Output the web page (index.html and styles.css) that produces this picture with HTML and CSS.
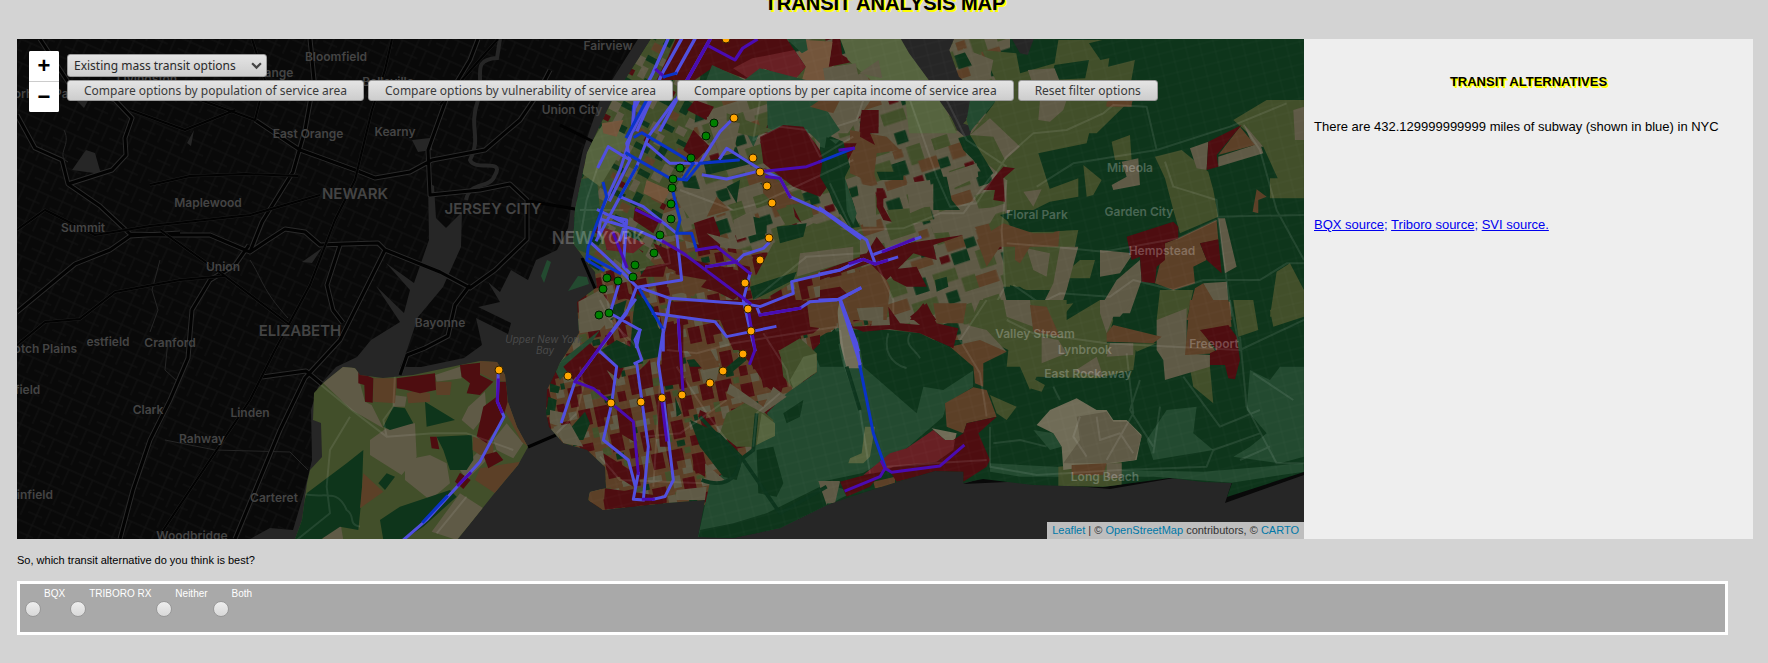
FILE: index.html
```html
<!DOCTYPE html>
<html lang="en">
<head>
<meta charset="utf-8">
<title>Transit Analysis Map</title>
<link rel="stylesheet" href="styles.css">
</head>
<body>
<h1 class="page-title">TRANSIT ANALYSIS MAP</h1>
<main class="layout">
<section class="map" aria-label="Transit map">
<svg class="map-canvas" viewBox="17 39 1287 500" preserveAspectRatio="xMidYMid slice" role="img" aria-label="New York area census tracts and subway lines">
<defs>
<pattern id="streets" width="26" height="22" patternUnits="userSpaceOnUse" patternTransform="rotate(24)"><path d="M0,5H26M9,0V22M0,16H15M20,5V22" fill="none" stroke="#131313"/></pattern>
<pattern id="lanes" width="14" height="11" patternUnits="userSpaceOnUse" patternTransform="rotate(-14)"><path d="M0,3H14M5,0V11" fill="none" stroke="#fff" stroke-opacity=".02"/></pattern>
<pattern id="uptown" width="46" height="52" patternUnits="userSpaceOnUse" patternTransform="rotate(28)">
<path class="olive" d="M0,0H46V52H0Z"/><path class="forest" d="M0,4H12V10H0ZM20,12H34V17H20ZM8,26H16V40H8ZM30,34H46V40H30Z"/><path class="sand" d="M14,0H24V8H14ZM36,8H46V18H36ZM0,16H7V28H0ZM20,40H30V50H20Z"/><path class="clay" d="M24,20H36V26H24ZM0,42H10V50H0Z"/><path class="rust" d="M36,24H42V30H36Z"/>
</pattern>
<pattern id="queens" width="78" height="70" patternUnits="userSpaceOnUse" patternTransform="rotate(-18) scale(1.2)">
<path class="sand" d="M0,0H78V70H0Z"/><path class="olive" d="M0,0H14V10H0ZM22,6H40V20H22ZM56,0H68V16H56ZM6,30H20V46H6ZM44,38H64V48H44ZM20,56H42V70H20ZM66,48H78V60H66Z"/><path class="forest" d="M40,10H52V22H40ZM0,18H9V26H0ZM64,26H78V36H64ZM26,38H38V50H26ZM50,56H60V66H50Z"/><path class="clay" d="M12,10H24V22H12ZM30,22H48V30H30ZM62,14H78V24H62ZM0,50H18V60H0ZM44,0H52V7H44Z"/><path class="rust" d="M20,28H28V35H20ZM54,26H62V32H54Z"/>
</pattern>
<pattern id="kings" width="62" height="58" patternUnits="userSpaceOnUse" patternTransform="rotate(-12)">
<path class="clay" d="M0,0H62V58H0Z"/><path class="rust" d="M0,0H16V12H8V20H0ZM24,8H36V22H30V28H24ZM46,0H58V16H46ZM10,30H22V48H10ZM40,34H54V42H48V54H40ZM26,48H34V58H26Z"/><path class="sand" d="M16,12H22V26H12V20H16ZM36,0H44V8H36ZM38,22H52V28H38ZM0,26H8V38H0ZM54,44H62V58H54ZM28,34H36V42H28Z"/><path class="olive" d="M18,0H24V6H18ZM56,20H62V30H56ZM0,42H8V50H0ZM24,30H32V34H24Z"/><path class="forest" d="M34,28H38V34H34ZM12,50H20V56H12Z"/>
</pattern>
<clipPath id="island"><path id="city-shape" d="M651,39L612,100 587,153 575,210 573,243 583,257 595,272 597,287 577,302 579,333 560,363 547,390 546,413 549,427 563,443 587,450 605,467 606,488 590,492 588,500 603,510 667,503 705,500 698,537 733,538 780,528 827,505 853,496 897,482 935,471 963,472 963,483 983,479 1033,485 1103,487 1170,478 1203,482 1232,483 1227,497 1304,472V39Z"/></clipPath>
<clipPath id="richmond"><path d="M323,383L343,367 355,368 360,375 383,378 413,375 460,365 480,361 497,362 505,375 508,402 517,427 528,447 518,465 493,495 458,539H295L302,520 307,483 310,470 322,457 321,423 313,420 314,393Z"/></clipPath>
</defs>
<path class="land" d="M17,39H1304V539H17Z"/>
<path d="M17,39H640V539H17Z" fill="url(#streets)"/>
<path class="water" d="M638,39L617,72 600,100 583,150 572,200 568,228 557,250 536,260 528,280 511,270 500,292 488,282 500,302 478,307 511,323 508,334 476,318 482,345 464,358 421,367 400,367 407,350 418,317 443,287 461,247 462,212 446,228 436,218 434,186 428,182 429,240 414,283 386,263 410,290 404,313 376,286 400,322 371,340 357,357 336,367 318,387 311,410 312,460 304,493 293,530 270,528 250,539H1304V39Z"/>
<path class="water" d="M72,170L86,150 95,153 101,174ZM187,143L194,130 191,146ZM412,140L430,138 432,150 418,152ZM302,262L322,248 312,263ZM76,100L90,97 84,108Z"/>
<path class="stream" d="M478,100C468,130 482,135 470,160C475,172 505,158 495,175C490,190 470,180 466,200M500,39L497,58C470,60 485,75 478,100"/>
<path class="stream thin" d="M64,130C72,145 55,155 68,162M160,260L152,290 158,310 150,332M168,340L165,370 178,382 170,398M165,440L215,450 290,452 308,470M250,260C262,278 262,290 288,318"/>
<path class="casing" d="M17,115L35,148 62,160 68,184 100,206 130,234 170,235 210,235 250,252 268,240 285,229 305,232 320,245 345,244 378,243 385,250 440,272 470,288 495,270 527,239 527,200 510,184 480,190 430,195 428,150 446,100 470,60 478,39M17,312L75,264 110,250 130,236 180,233M68,184L112,170 126,155 125,138 132,118 115,100 70,85 40,39M250,252L262,222 293,172 305,130 314,80 310,39M120,539L133,490 150,440 170,400 188,358 192,310 210,280 235,265 249,245M340,245L327,285 333,310 343,323M385,250L340,340 305,378 280,430 235,539M262,377L306,371 323,385M400,375L407,355 425,348 448,336 455,305 470,285M255,120L300,150 355,170 375,178 410,172 432,160 485,150 520,120 537,95 550,70"/>
<path class="road" d="M17,115L35,148 62,160 68,184 100,206 130,234 170,235 210,235 250,252 268,240 285,229 305,232 320,245 345,244 378,243 385,250 440,272 470,288 495,270 527,239 527,200 510,184 480,190 430,195 428,150 446,100 470,60 478,39M17,312L75,264 110,250 130,236 180,233M68,184L112,170 126,155 125,138 132,118 115,100 70,85 40,39M250,252L262,222 293,172 305,130 314,80 310,39M120,539L133,490 150,440 170,400 188,358 192,310 210,280 235,265 249,245M340,245L327,285 333,310 343,323M385,250L340,340 305,378 280,430 235,539M262,377L306,371 323,385M400,375L407,355 425,348 448,336 455,305 470,285M255,120L300,150 355,170 375,178 410,172 432,160 485,150 520,120 537,95 550,70M528,201L575,209M560,125L600,145M582,258L600,300M528,447L556,435"/>
<path class="casing thin" d="M17,345L45,322 80,319 115,292 180,280 225,276M160,535L200,475 250,400 275,350 310,285 335,220 355,180 372,110 385,70 392,39M150,185L190,176 245,174 298,176M195,98L255,120 265,80 252,39M440,105L498,39M17,230L45,210 95,235 150,226 250,215 320,195M160,230L225,276 290,325M130,110L185,130 235,110"/>
<path class="road thin" d="M17,345L45,322 80,319 115,292 180,280 225,276M160,535L200,475 250,400 275,350 310,285 335,220 355,180 372,110 385,70 392,39M150,185L190,176 245,174 298,176M195,98L255,120 265,80 252,39M440,105L498,39M17,230L45,210 95,235 150,226 250,215 320,195M160,230L225,276 290,325M130,110L185,130 235,110"/>
<path class="marsh" d="M541,276L547,260 551,262 544,283ZM568,291L578,276 587,277 589,284Z"/>
<path class="land" d="M963,484L983,478 1110,489 1180,477 1232,482 1225,503 1304,475V470L1170,475Z"/>

<g clip-path="url(#richmond)">
<path class="olive" d="M290,355H535V540H290Z"/>
<g transform="translate(280 340) scale(.3333)">
<path class="sand" d="M130,130L190,70 235,90 240,130 255,185 275,195 310,265 215,210ZM465,105L540,80 545,115 470,125ZM340,250L405,250 410,350 365,405 270,345 270,300ZM375,360L450,345 500,370 510,430 450,480 375,420ZM565,200L615,155 620,220 580,270 545,240ZM540,390L590,340 650,330 560,420ZM640,300L680,250 730,310 700,355 650,330ZM540,460L610,505 530,600 455,575ZM120,575L180,540 190,600 130,600ZM340,165L380,170 375,200 340,200Z"/>
<path class="forest" d="M40,600L80,460 200,370 250,330 245,470 235,570 180,560 120,600ZM470,290L575,285 580,360 560,390 510,390 490,330ZM435,185L525,240 440,260ZM340,200L375,205 400,250 330,270 310,260ZM300,540L360,500 510,450 530,470 430,560 370,600 310,600ZM295,430L320,400 345,410 315,450Z"/>
<path class="clay" d="M280,115L350,115 345,190 280,185ZM380,160L410,150 450,160 450,185 385,190ZM465,125L515,125 510,165 470,165ZM600,60L680,65 680,125 640,120 600,100ZM660,185L685,185 745,320 725,305ZM250,400L310,455 240,505ZM600,385L720,365 700,430 645,460 585,420ZM580,290L640,310 640,340 600,345 578,330Z"/>
<path class="rust" d="M235,95L280,115 278,188 255,185 253,135 235,130ZM350,115L465,100 468,150 420,160 380,150 350,145ZM540,75L600,68 600,105 640,125 600,165 560,160 570,130 545,110ZM655,125L680,125 683,185 670,230 620,310 590,290 610,200 650,170ZM450,290L470,290 478,328 455,325ZM610,345L650,335 670,360 625,385ZM540,398L572,420 550,447 525,425Z"/>
<path class="ridge" d="M80,100L215,210 320,290 460,280 560,280 700,330M210,230L150,330 140,440 150,520 50,600M320,290L310,240 340,200 345,100M470,580L560,470M60,460C130,480 170,440 200,510C230,530 200,550 240,560"/>
</g>
</g>

<g clip-path="url(#island)">
<path class="forest" d="M570,39H1304V539H540Z"/>
<path d="M640,39H1010V340H640Z" fill="url(#queens)"/>
<path d="M570,39H705L690,160 664,210 650,262 600,285H560Z" fill="url(#uptown)"/>
<path d="M540,290L610,270 650,262 665,235 700,245 850,262 880,290 870,330 800,400 700,510H540Z" fill="url(#kings)"/>
<path class="marsh" d="M698,537L710,482 740,463 753,447 773,433 767,413 787,393 817,372 817,350 837,328 890,330 920,333 953,350 973,370 973,387 947,403 943,417 907,448 863,473 820,482 853,492 780,530Z"/>
<g transform="translate(580 0) scale(.3827 .3333)">
<path class="rust" d="M250,117H540L590,200 560,240 480,205 440,240 350,200 300,240H200L230,170ZM660,117H680L685,165 715,185 650,200ZM490,375L560,365 590,400H480ZM735,330H780V400H730ZM300,300L350,320 330,360 280,330Z"/>
<path class="rust-pale" d="M400,205L450,175 560,150 590,200 560,240 480,205 440,235Z"/>
<path class="clay-pale" d="M590,120L660,125 650,200 640,240H580L590,200 570,160ZM560,300H640L640,330H580Z"/>
<path class="marsh" d="M540,117H590L595,150 580,160ZM470,205L590,240H430ZM490,300H560L640,370 600,400H490ZM345,195L430,240H330Z"/>
<path class="olive-pale" d="M680,117H840L900,220 940,290 985,400H860L850,300 760,240 700,180Z"/>
<path class="sand" d="M635,205L720,190 730,240H640ZM780,180L730,220 790,235ZM640,300H760L700,400H640Z"/>
<path class="water" d="M835,110L860,160 905,230 950,300 985,390 1015,420 1025,380 1000,370 1050,290 990,230 965,150 980,110ZM1125,110H1188L1170,165 1150,160Z"/>
<path class="olive" d="M1050,150L1140,160 1150,220 1240,190 1250,120H1390L1380,200 1450,180 1430,310 1350,400H1040L1110,300Z"/>
<path class="forest" d="M1240,195L1330,180 1320,235 1230,240ZM1330,130L1400,110V170L1360,180Z"/>
<path class="sand" d="M1000,145L1080,180 1070,240 1040,230ZM1170,210L1240,205 1280,320 1220,360 1200,310Z"/>
<path class="clay" d="M1380,300H1445L1440,315 1375,318Z"/>
</g>
<g transform="translate(820 100) scale(.3333)">
<path class="water" d="M350,-10L385,40 415,85 440,60 430,30 450,-10Z"/>
<path class="marsh" d="M450,0H530L450,95 440,60Z"/>
<path class="olive" d="M530,0H860L820,50 800,130 655,160 700,300 640,330 560,330 560,240 500,190 440,120ZM1240,60L1340,0H1452V235L1380,250 1330,140ZM1005,170L1085,150 1165,215 1180,270 1195,350 1080,400 1060,330 1035,235ZM875,125L930,105 935,180 885,180ZM790,195L845,240 820,285 800,290ZM680,270L775,235V290L690,305ZM550,400L775,390 765,440 740,570H620L550,550ZM1370,515L1410,490 1452,570V640L1350,650ZM1350,235H1452V295H1350ZM1020,570H1120L1100,660H1010ZM745,510L780,480H825L810,535H750ZM680,620L760,610 720,660H660ZM200,330L330,320 340,360 220,380Z"/>
<path class="sand" d="M660,0H740L730,30 690,65 655,60ZM510,55L600,140 555,180 520,110 450,105ZM905,185L955,175 960,255 880,270 875,255 920,230ZM1110,145L1165,125 1160,210 1130,205ZM1195,170L1320,130 1330,160 1195,200ZM1195,355H1215L1250,500 1215,520ZM840,450L940,460 900,520 840,530ZM890,540L960,480 965,540 930,640H830ZM720,440H775L740,570 730,600 670,610 700,550ZM1050,475L1100,490 1080,540 1050,520ZM1150,550L1220,545 1225,600H1170ZM610,275L665,268 640,320ZM555,610L630,615V660H555ZM620,445L690,460 680,530 640,510ZM1270,70L1330,140 1300,140ZM1420,30L1452,20V120L1425,120Z"/>
<path class="clay" d="M1260,80L1305,135 1195,165ZM1075,415L1190,360 1195,420 1140,430 1160,480 1120,500 1125,550 1060,570 1005,550 1035,430ZM1310,268L1340,290 1315,300V340L1298,335ZM550,370L640,400H700L720,380 715,440H540L500,500 470,420ZM585,440H630L600,490 585,480ZM1125,565L1150,550 1180,600 1230,605 1235,660H1100ZM0,540L180,500 210,560 200,660H0ZM630,615L685,625 660,660H630ZM90,90L200,110 240,150 170,160 160,250 90,220ZM860,5H935V20H860Z"/>
<path class="rust" d="M1165,125L1265,75 1190,165 1195,200 1160,210ZM920,410L1060,365 1075,380V415L1035,430V480L1010,500 1005,550 965,545 960,470 935,480ZM1140,430L1195,418 1205,520 1160,480ZM490,270L550,200 585,205 550,235 555,305 520,300 525,270ZM125,30H175V80L150,100 165,135 120,110ZM170,265H190V320L215,365 190,360 170,320ZM0,490L140,460 170,410 200,450 260,430 430,405 340,435 350,480 280,460 200,540 150,490 0,540ZM200,510L290,500 320,560 260,560 220,540ZM310,610L350,660H270ZM0,570L60,560 90,590 0,600ZM60,130L110,130 80,190Z"/>
<path class="forest" d="M0,95L70,125 90,200 60,260 120,380 90,385 40,310 0,200ZM340,230H380L395,300 420,330H340ZM415,115L450,105 520,220 500,240 460,180 430,150ZM170,215H250V240H180ZM550,560H600L690,620 560,605ZM345,540L380,530 385,560 350,575ZM540,345L600,330 700,340 740,390 700,395 640,395 570,370Z"/>
<path class="marsh" d="M40,240L75,235 110,340 100,375 60,300ZM0,115L60,120 30,150 0,140Z"/>
<path class="sand" d="M260,250L330,240 340,310 270,340ZM380,220L470,190 475,230 390,270ZM430,330L540,320 510,370 430,390ZM330,360L430,340 470,390 340,400ZM110,250L165,260 170,380 130,380Z"/>
<path class="ridge" d="M0,95L110,60 130,0M270,0L350,230 390,320 470,310 560,170 640,100 740,90 850,40 880,15 980,20 1010,150 1230,80 1400,10M1035,185L1060,260 1110,275 1190,300 1195,360 1235,650M1270,75L1320,150 1370,330 1452,480M560,240L545,390 555,560 500,660M0,460L120,390 250,385 360,340 430,340 520,220M580,555L660,610 720,580 870,590 940,540 1060,570 1150,540 1320,540 1400,490 1452,490M650,260L760,190 1010,150M160,470L220,600V660M560,430L700,440 850,455 1075,415 1190,360M380,0L440,120 560,200M1190,350L1452,345"/>
</g>
<g transform="translate(820 300) scale(.3333)">
<path class="forest" d="M0,100L90,90 200,90 300,100 400,150 462,210 370,270 310,260 290,340 130,200 115,110 60,130 0,160Z"/>
<path class="marsh" d="M1040,330L1130,320 1120,400 1180,450 1000,480 980,420ZM1290,210L1350,240 1380,200 1452,200V470L1380,490 1240,470 1290,440 1340,400 1280,330ZM510,490L900,510 1150,515 1450,490 1452,515 1235,548 1000,530 600,530 510,515ZM640,390L700,400 725,440 690,450Z"/>
<path class="olive" d="M440,90L480,0H740V60L840,0 880,60 860,130H950L940,210 830,235 650,230 630,270 600,200H560L565,150ZM1020,0H1110L1100,30 1020,40ZM1110,205L1170,200 1180,310 1120,260ZM510,285L590,320 560,360 530,340ZM715,500L905,480V560H715ZM1350,30L1452,10V50L1360,80ZM1240,0H1300L1315,90 1255,110ZM940,130H1010L950,155ZM630,230L675,255 665,275 630,265Z"/>
<path class="olive-pale" d="M135,380H165L150,470 130,490H85L90,475 125,460Z"/>
<path class="sand-pale" d="M650,375L690,330 770,295 830,330H860L880,360H920L965,405 950,480 730,510 725,440 700,400ZM335,385L410,400 405,420H375ZM50,0L70,20 90,90 120,205H80L60,130Z"/>
<path class="sand" d="M770,350L860,335 880,365 925,365 965,410 945,480 860,490 730,490 780,420ZM1010,60L1100,25V160L1170,165V200L1035,240 1030,180 1010,150ZM550,0H630L640,80 560,50ZM840,0H940L900,50 880,50 860,100 840,40ZM420,70L500,90 560,155 430,150ZM665,110L715,120 740,160 665,190ZM870,130H940V165L860,170ZM760,215L830,170 850,230ZM0,545H60L45,610H0ZM110,25L190,20V65L120,60ZM860,490H905V535H860Z"/>
<path class="clay" d="M375,310L460,262 500,270 530,350 440,370 430,400 380,380ZM390,140L480,120 560,155 490,190V260L465,250 460,200ZM630,15L680,20 720,110 640,95ZM860,100L880,75 1025,110 1000,130 860,125ZM1110,0H1225L1235,80 1145,90 1190,160 1095,165ZM755,495L860,490 850,525H755ZM0,20L50,20V80L0,110ZM340,10H440L430,70 350,70ZM160,545L225,530V555L165,565Z"/>
<path class="rust" d="M90,80L210,75 205,20 240,70 300,75 270,50 320,10 350,70 415,85 400,145 300,100 210,88 130,95ZM1140,90L1225,75 1250,110 1260,180 1245,238 1225,235 1215,195H1170V160L1190,150ZM400,420L430,400 440,370 530,350 475,400 510,480 500,500 430,545V515H345L230,545 200,500 360,480ZM60,545L190,510 150,560 80,590Z"/>
<path class="rust-pale" d="M130,525L210,460 260,445 340,390 375,420H405L400,450 350,485 220,500 190,515Z"/>
<path class="ridge" d="M205,100C190,150 210,190 260,205M270,100C250,140 290,150 300,175M60,90L75,200 120,330 150,520M510,380V500L650,525 900,510 1160,500 1180,450 1320,400M1260,110L1280,320 1370,490H1452M1230,0L1260,150 1452,60M500,0L420,120 480,220 500,350M560,60L640,100 860,130 1060,140 1260,150M920,160L940,340 860,480M700,260L720,300M960,240L930,330 1000,440M1090,230L1200,380 1320,330M1300,220L1420,300M1350,440L1260,480M780,350L760,410 800,470M830,350L840,420 900,400 940,460M520,430L600,420 680,440M1020,320L1000,460M200,500L340,490 500,480"/>
</g>
<g transform="translate(520 100) scale(.3333)">
<path class="marsh" d="M165,240L230,230 240,330 200,460 150,440 160,350ZM740,0H900L960,90 900,130 850,80 750,95ZM680,100L720,95 700,140Z"/>
<path class="olive-pale" d="M200,150L250,70 330,110 240,260 185,220Z"/>
<path class="clay-pale" d="M245,70L310,60 290,110 250,100ZM380,240L450,270 430,310 370,280Z"/>
<path class="olive" d="M690,560L760,430 880,370 1020,400V470L830,540 730,600ZM250,450L350,440 410,500 340,520ZM770,330L870,300 880,350 800,380ZM620,40L760,90 700,110 620,90Z"/>
<path class="rust" d="M720,110L790,75 850,80 900,150 930,250 900,290 820,260 730,190ZM520,360L570,320 600,400V450H540ZM400,430L520,480 690,520V560L640,600 440,500ZM345,320L420,360 400,400 340,360ZM450,605L700,600 820,590 850,750H640L600,660 450,650ZM490,150L520,90 570,140 530,180ZM300,570L350,590 330,600 300,590ZM380,500L440,490 430,530H360ZM780,620L900,590 950,640 880,700 780,720ZM820,320L845,370 825,350ZM520,510L640,500 640,590 540,560Z"/>
<path class="rust-pale" d="M245,380L300,400 375,430 340,460 260,450Z"/>
<path class="sand" d="M480,260L560,270 640,330 520,370 470,300ZM640,360L700,330 720,400 650,420ZM840,460L1000,440V480L830,530ZM175,605L240,570 290,640 240,690 180,700ZM560,50L660,70 640,160 600,170ZM370,650H420V700H380ZM560,400L640,420 620,450Z"/>
<path class="forest" d="M350,580L400,620 430,750H330L340,640ZM690,560L830,515 820,540 700,600ZM550,185L660,165 700,190 560,225ZM920,110L970,150 980,330 1000,400 930,280 900,230ZM770,380L860,370 850,410 780,430ZM620,260L660,240 650,310ZM700,350L740,360 740,400 710,410ZM270,620L320,600 300,680ZM720,250H770V290Z"/>
<path class="clay" d="M720,210L800,260 840,310 770,320 730,280ZM590,290L630,330 560,350ZM900,0H960L940,40 870,20ZM450,520L560,540 520,590 440,560ZM860,600L960,600 940,690 870,680ZM600,450L700,470 690,500 640,490Z"/>
<path class="ridge" d="M180,330L310,330M480,270L560,300 640,330 720,310 1000,180M720,0L700,120 780,80 860,90 900,170 1000,110M930,250L1000,400M700,600L860,470 1020,460M440,430L450,490 360,510M245,520L270,640 330,740M240,180L200,300 180,420"/>
</g>
<g transform="translate(520 300) scale(.3333)">
<path class="marsh" d="M100,200L240,90 200,150 120,240Z"/>
<path class="rust" d="M165,230L245,155 310,205 280,280 220,265ZM255,565L440,590V608L250,630ZM425,90L490,60V250L425,260ZM600,0H850L760,110 800,220 780,290 740,260 700,200 620,110ZM250,460L330,510 340,560 260,510ZM290,330L340,360 350,430 300,400ZM410,320L440,310 450,440H420ZM520,470L555,480V530L520,510ZM130,200L210,130 230,150 160,240ZM350,220L390,180 400,260 360,270ZM540,330L560,340 555,370 535,350Z"/>
<path class="forest" d="M245,150L290,120 350,150 370,190 300,205ZM370,30L430,100 420,170 370,180 350,120ZM510,360L600,400 670,470 650,540 610,530 540,440ZM155,380L195,335 210,370 190,420H150ZM500,180L550,175V200H510ZM610,210L670,160 680,180 620,230ZM465,290L485,340 470,350ZM85,290L110,300 105,335 80,330ZM90,250L120,260 115,280 90,275ZM880,150L945,85 970,200 900,200ZM710,450L760,440 790,550 770,590 715,580ZM790,340L850,300 840,350 800,370ZM540,690L640,670 740,640 900,560 925,615 780,690 640,718H535Z"/>
<path class="olive" d="M620,340L690,300 760,360V405L700,440H650L600,400ZM780,150L840,115 890,160V215L820,265 790,230Z"/>
<path class="olive-pale" d="M725,340L765,370V408L710,435ZM850,170L890,160V215L820,265 810,240Z"/>
<path class="sand" d="M470,570L560,560 555,600H465ZM555,490L620,545H560ZM620,280L730,340 800,290 760,260 730,320 630,250ZM100,380L150,370 190,440 130,430ZM90,330L140,340 120,380 90,370ZM260,210L300,240 290,260ZM540,210L600,190 590,240 550,250ZM895,543H960L920,615Z"/>
<path class="clay" d="M205,575L245,565 255,630H205ZM255,540L300,530 310,560 260,565ZM500,150L560,130 600,200 550,210Z"/>
<path class="shade" d="M670,480L780,640 920,560M545,540C600,560 650,550 660,480L700,450 710,340M660,480L540,350M980,200L1020,330"/>
<path class="ridge" d="M110,400L170,340 190,260 180,200M240,0L270,60 340,130 370,180M420,250L400,560M440,150L530,160 640,130 760,110 950,80M470,200L560,340 620,420M370,410L480,400 620,300M240,470L300,540 550,550M700,440L710,340 780,280M730,100L800,210 810,260"/>
</g>
<path d="M540,39H1304V539H540Z" fill="url(#lanes)"/>
</g>

<g class="lines">
<g transform="translate(580 0) scale(.3827 .3333)">
<path d="M230,117L190,220 140,330V390M265,117L215,220 150,390M300,117L250,220M340,117L280,240 210,390"/>
<path class="violet" d="M340,140L405,180 425,145 460,120M340,117L280,240M200,210L220,230"/><path class="blue" d="M220,230L250,220M140,320V390"/>
</g>
<g transform="translate(520 100) scale(.3333)">
<path d="M345,0L335,100 300,210 245,330 235,410M385,0L320,130 330,180 270,300M465,0L385,110 350,200 300,290 230,420M235,200L265,140 330,180M380,130L450,190 530,190M540,190L600,95 640,55M600,175L620,145 715,205 780,235 810,290 910,335 1020,415M550,225L620,237 710,215M300,290L370,320 470,400 485,540 360,560M250,360L350,390 430,425M215,430L290,500 350,560 450,595 680,612 720,620 820,580 815,545 960,510 1020,480M710,620L720,645 840,625 870,605 950,600 1020,565M960,600L1015,750M745,430L730,445 670,465 650,485 560,500M450,600L430,700V750M400,640L585,665 620,710 765,680M475,660L480,750M690,520L670,600 690,690 705,750M350,560L320,640 235,750M300,540L270,640 360,690 350,740M280,350L320,360 310,500 340,530M235,330L315,370 300,420"/>
<path class="blue" d="M250,250L260,290 205,440 200,480 250,510M320,160L450,235 500,240 540,190M345,110L365,98 520,190 490,235M455,260L480,360 470,400 515,400 530,450M540,190L655,180M360,570L430,690M900,185L1000,145M210,470L300,520M380,0L320,110M300,290L350,200"/>
<path class="violet" d="M720,215L860,200 900,185M530,450L590,440 690,520M430,425L490,460 690,610M280,400L320,500M740,230L780,235 810,290M560,500L650,485M350,330L420,365M960,150L1000,145M720,645L840,625"/>
</g>
<g transform="translate(520 300) scale(.3333)">
<path d="M430,90L415,190 430,290 460,540 435,590 400,598M370,600L340,598 355,520M345,190L365,180 345,120 360,90M350,190L385,440 370,600M345,0L165,245 125,365M240,155L290,200 275,310 250,420 325,480 345,555M960,0L1020,190"/>
<path class="violet" d="M270,100L165,245M165,245L220,265 340,365 355,520M475,60L490,290M400,598H370M685,30L705,150 690,190M425,300L440,420"/>
</g>
<g transform="translate(820 100) scale(.3333)">
<path d="M0,325L140,420 165,490M165,462L300,412M0,522L60,510 130,478 165,492 230,472M0,600L60,598 120,565"/>
<path class="violet" d="M190,455L280,418M90,490L130,478 165,492 200,482"/>
</g>
<g transform="translate(820 300) scale(.3333)">
<path d="M62,0L110,130 120,200"/><path class="blue" d="M120,200L160,400 195,500"/><path class="violet" d="M78,572L180,530 195,505 215,517 360,498 430,438M195,505L185,485"/>
</g>
<g transform="translate(280 340) scale(.3333)">
<path d="M655,90L652,185 672,230 600,365 440,540 370,600"/><path class="violet" d="M655,120L652,185 665,215M570,400L535,435"/><path class="blue" d="M500,470L430,545"/>
</g>
</g>

<g class="labels">
<text x="336" y="61">Bloomfield</text><text x="608" y="50">Fairview</text><text x="272" y="77">Orange</text><text x="147" y="83">Livingston</text><text x="388" y="86">Belleville</text><text x="42" y="98">Florham Park</text><text x="572" y="114">Union City</text><text x="308" y="138">East Orange</text><text x="395" y="136">Kearny</text><text x="208" y="207">Maplewood</text><text x="83" y="232">Summit</text><text x="223" y="271">Union</text><text x="440" y="327">Bayonne</text><text x="170" y="347">Cranford</text><text x="108" y="346">estfield</text><text x="38" y="353">Scotch Plains</text><text x="17" y="394">Fanfield</text><text x="148" y="414">Clark</text><text x="250" y="417">Linden</text><text x="202" y="443">Rahway</text><text x="26" y="499">Plainfield</text><text x="274" y="502">Carteret</text><text x="192" y="540">Woodbridge</text>
<g class="labels-large"><text x="355" y="199">NEWARK</text><text x="493" y="214">JERSEY CITY</text><text x="300" y="336">ELIZABETH</text></g>
<g class="labels-pale"><text class="metro" x="598" y="244">NEW YORK</text><text x="1130" y="172">Mineola</text><text x="1139" y="216">Garden City</text><text x="1037" y="219">Floral Park</text><text x="1162" y="255">Hempstead</text><text x="1035" y="338">Valley Stream</text><text x="1085" y="354">Lynbrook</text><text x="1088" y="378">East Rockaway</text><text x="1214" y="348">Freeport</text><text x="1105" y="481">Long Beach</text></g>
<g class="labels-water"><text x="544" y="343">Upper New York</text><text x="545" y="354">Bay</text></g>
</g>

<g class="stop-orange"><circle cx="726" cy="39" r="4"/><circle cx="734" cy="118" r="4"/><circle cx="753" cy="158" r="4"/><circle cx="760" cy="172" r="4"/><circle cx="767" cy="186" r="4"/><circle cx="772" cy="203" r="4"/><circle cx="769" cy="238" r="4"/><circle cx="760" cy="260" r="4"/><circle cx="745" cy="283" r="4"/><circle cx="748" cy="309" r="4"/><circle cx="751" cy="331" r="4"/><circle cx="743" cy="354" r="4"/><circle cx="723" cy="371" r="4"/><circle cx="710" cy="383" r="4"/><circle cx="682" cy="395" r="4"/><circle cx="662" cy="398" r="4"/><circle cx="641" cy="402" r="4"/><circle cx="611" cy="403" r="4"/><circle cx="568" cy="376" r="4"/><circle cx="499" cy="370" r="4"/></g>
<g class="stop-green"><circle cx="714" cy="123" r="4"/><circle cx="706" cy="136" r="4"/><circle cx="691" cy="158" r="4"/><circle cx="680" cy="168" r="4"/><circle cx="673" cy="179" r="4"/><circle cx="672" cy="188" r="4"/><circle cx="671" cy="204" r="4"/><circle cx="671" cy="219" r="4"/><circle cx="660" cy="235" r="4"/><circle cx="654" cy="253" r="4"/><circle cx="635" cy="265" r="4"/><circle cx="633" cy="277" r="4"/><circle cx="618" cy="281" r="4"/><circle cx="607" cy="278" r="4"/><circle cx="603" cy="289" r="4"/><circle cx="599" cy="315" r="4"/><circle cx="609" cy="313" r="4"/></g>
</svg>
<div class="map-controls">
<div class="zoom"><button type="button" aria-label="Zoom in">+</button><button type="button" aria-label="Zoom out">−</button></div>
<div class="filters">
<div class="select-wrap"><select aria-label="Transit option"><option>Existing mass transit options</option><option>BQX</option><option>Triboro RX</option></select><svg class="chevron" viewBox="0 0 10 7" aria-hidden="true"><path d="M1,1L5,5 9,1"/></svg></div>
<div class="filter-row"><button type="button">Compare options by population of service area</button><button type="button">Compare options by vulnerability of service area</button><button type="button">Compare options by per capita income of service area</button><button type="button">Reset filter options</button></div>
</div>
</div>
<div class="attribution"><a href="#leaflet">Leaflet</a> | © <a href="#osm">OpenStreetMap</a> contributors, © <a href="#carto">CARTO</a></div>
</section>
<aside class="sidebar">
<h2>TRANSIT ALTERNATIVES</h2>
<p>There are 432.129999999999 miles of subway (shown in blue) in NYC</p>
<p class="sources"><a href="#bqx">BQX source</a>; <a href="#triboro">Triboro source</a>; <a href="#svi">SVI source.</a></p>
</aside>
</main>
<form class="poll">
<p id="question">So, which transit alternative do you think is best?</p>
<div class="choices" role="radiogroup" aria-labelledby="question">
<input type="radio" name="choice" id="c1"><label for="c1">BQX</label>
<input type="radio" name="choice" id="c2"><label for="c2">TRIBORO RX</label>
<input type="radio" name="choice" id="c3"><label for="c3">Neither</label>
<input type="radio" name="choice" id="c4"><label for="c4">Both</label>
</div>
</form>
</body>
</html>
```
FILE: styles.css
```css
* { box-sizing: border-box; }
body {
  margin: 0;
  padding: 0 15px 28px 17px;
  background: #d3d3d3;
  color: #000;
  font-family: "Liberation Sans", Arial, sans-serif;
  font-size: 13px;
  overflow: hidden;
}
.page-title {
  margin: -12px 0 0;
  padding-bottom: 21px;
  font-size: 20px;
  line-height: 30px;
  text-align: center;
  text-shadow: 2px 2px #ff0;
}
.layout { display: grid; grid-template-columns: minmax(0, 1287fr) minmax(0, 449fr); min-height: 500px; }
.map { position: relative; overflow: hidden; background: #262626; }
.map-canvas { position: absolute; inset: 0; width: 100%; height: 100%; }
.map-controls { position: relative; display: flex; gap: 8px; padding: 12px; align-items: flex-start; }
.zoom { display: flex; flex-direction: column; width: 30px; border-radius: 2px; background: #fff; overflow: hidden; }
.zoom button { height: 30px; padding: 0; border: 0; background: #fff; color: #000; font: bold 22px/30px "Liberation Sans", sans-serif; }
.zoom button + button { height: 31px; border-top: 1px solid #ccc; }
.filters { display: flex; flex-direction: column; gap: 3px; padding-top: 3px; }
.select-wrap { position: relative; width: 200px; }
.filters select, .filters button {
  border: 1px solid #9a9a9a;
  border-radius: 3px;
  background: linear-gradient(#e4e4e4, #cdcdcd);
  color: #3a3a3a;
  font: 12px/19px "Noto Sans", sans-serif;
}
.filters select { display: block; appearance: none; width: 100%; height: 23px; padding: 0 6px; color: #2a2a2a; }
.chevron { position: absolute; right: 5px; top: 8px; width: 11px; height: 8px; fill: none; stroke: #444; stroke-width: 2; pointer-events: none; }
.filter-row { display: flex; gap: 4px; }
.filters button { height: 21px; padding: 0 16px; white-space: nowrap; }
.attribution { position: absolute; right: 0; bottom: 0; padding: 0 5px; background: rgba(255,255,255,.7); color: #333; font: 11px/17px "Liberation Sans", sans-serif; }
.attribution a { color: #0078a8; text-decoration: none; }
.sidebar { padding: 0 10px; background: #eee; }
.sidebar h2 { margin: 32px 0 24px; font-size: 13px; line-height: 22px; text-align: center; text-shadow: 1px 1px #ff0, 2px 2px #ff0; }
.sidebar p { margin: 0; line-height: 20px; }
.sidebar .sources { margin-top: 78px; }
.sources, .sources a { color: #00e; }
.poll p { margin: 12px 0; font-size: 11px; line-height: 18px; }
.choices { display: flex; align-items: flex-start; min-height: 54px; margin-right: 25px; padding: 3px 5px; border: 3px solid #fff; background: #a9a9a9; color: #fff; font-size: 10px; line-height: 14px; }
.choices label { margin: 0 5px 0 3px; }
.choices input { appearance: none; width: 16px; height: 16px; margin: 14px 0 0; border: 1px solid #999; border-radius: 50%; background: linear-gradient(#eee, #d8d8d8); }

.land { fill: #090909; }
.water { fill: #262626; }
.forest { fill: #0e351b; }
.marsh { fill: #234a30; }
.olive { fill: #424f2a; }
.olive-pale { fill: #56643f; }
.sand { fill: #5f5a46; }
.sand-pale { fill: #706c57; }
.clay { fill: #5c4027; }
.clay-pale { fill: #73553b; }
.rust { fill: #4e0d10; }
.rust-pale { fill: #682024; }
.stream { fill: none; stroke: #262626; stroke-width: 4; }
.stream.thin { stroke-width: 1; }
.casing { fill: none; stroke: #2a2a2a; stroke-width: 5; stroke-linejoin: round; }
.road { fill: none; stroke: #020202; stroke-width: 3; stroke-linejoin: round; }
.casing.thin { stroke-width: 3; stroke: #1e1e1e; }
.road.thin { stroke-width: 2; }
.ridge { fill: none; stroke: #fff; stroke-opacity: .09; stroke-width: 6; stroke-linejoin: round; }
.shade { fill: none; stroke: #0d351d; stroke-width: 11; stroke-linejoin: round; }
.lines { fill: none; stroke: #514fe0; stroke-width: 9; stroke-linejoin: round; stroke-linecap: square; }
.lines .blue { stroke: #0a33c8; }
.lines .violet { stroke: #4a0bb2; }
.labels { fill: #444; font: 600 12px Inter, sans-serif; text-anchor: middle; }
.labels-large { font-size: 15px; }
.labels-pale { fill: #fff; fill-opacity: .25; }
.metro { font-size: 17px; }
.labels-water { fill: #4a4a4a; font-size: 10px; font-style: italic; font-weight: 400; }
.stop-orange { fill: #ffa500; stroke: #332200; }
.stop-green { fill: #008000; stroke: #001a00; }
```
